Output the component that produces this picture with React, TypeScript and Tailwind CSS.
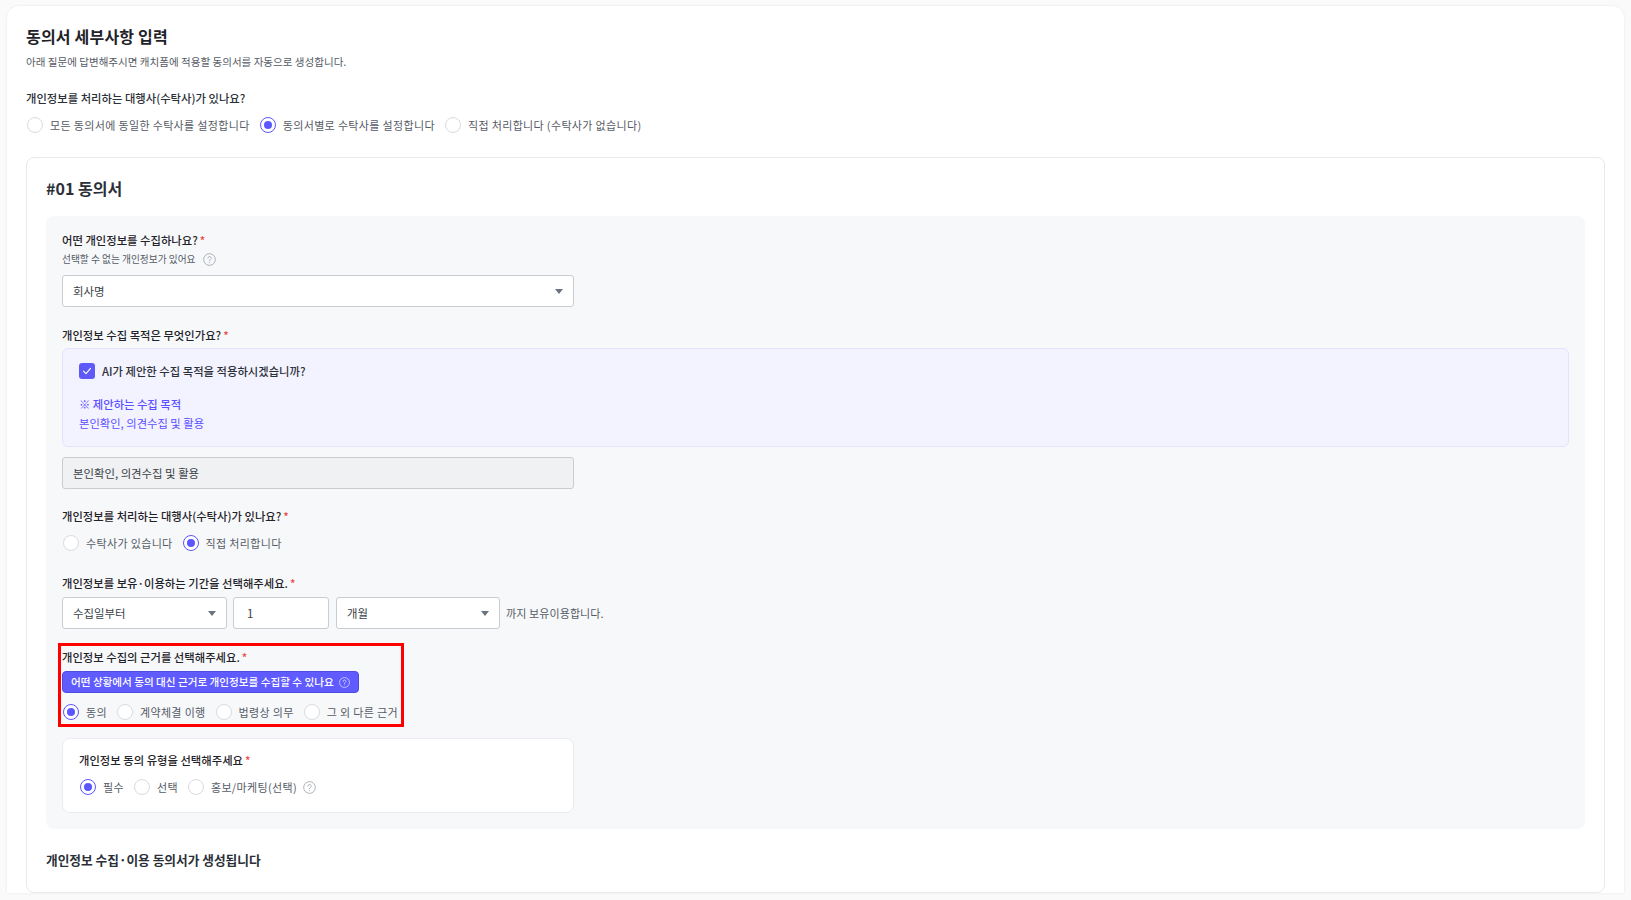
const FONT = "font-['Noto_Sans_CJK_KR','Noto_Sans',sans-serif]";

function Help({ className = "", color = "#9ca3af", size = 13 }: { className?: string; color?: string; size?: number }) {
  return (
    <svg width={size} height={size} viewBox="0 0 14 14" fill="none" className={className}>
      <circle cx="7" cy="7" r="6.3" stroke={color} strokeWidth="0.9" />
      <path d="M5.3 5.5a1.75 1.75 0 1 1 2.6 1.5c-.6.35-.9.7-.9 1.4" stroke={color} strokeWidth="0.9" strokeLinecap="round" />
      <circle cx="7" cy="10.2" r="0.55" fill={color} />
    </svg>
  );
}

function Radio({ label, checked = false }: { label: string; checked?: boolean }) {
  return (
    <label className="flex items-center gap-[7px]">
      {checked ? (
        <span className="flex h-4 w-4 items-center justify-center rounded-full border border-[#5b57ff] bg-white">
          <span className="h-2 w-2 rounded-full bg-[#5b57ff]" />
        </span>
      ) : (
        <span className="h-4 w-4 rounded-full border border-[#d9dbe0] bg-white" />
      )}
      <span className="text-[11px] leading-4 tracking-[0.35px] text-[#555b66]">{label}</span>
    </label>
  );
}

function Question({ text, className = "" }: { text: string; className?: string }) {
  return (
    <div className={`text-[11.33px] font-medium leading-4 text-[#1f2329] ${className}`}>
      {text}
      <span className="ml-[2px] text-[#ef4444]">*</span>
    </div>
  );
}

function Select({ value, className }: { value: string; className: string }) {
  return (
    <div className={`flex h-8 items-center justify-between rounded-[3px] border border-[#c9ccd1] bg-white pl-[10px] pr-[10px] text-[11.4px] text-[#3a3f47] ${className}`}>
      <span className="pt-[1px]">{value}</span>
      <span className="h-0 w-0 border-x-[4px] border-t-[5px] border-x-transparent border-t-[#6b7280]" />
    </div>
  );
}

export default function App() {
  return (
    <div className={`h-[900px] overflow-hidden bg-[#fafafa] pl-[7px] pr-[7px] pt-[6px] ${FONT}`}>
      <div className="rounded-t-[12px] bg-white pl-[19px] pr-[19px] pt-[19px] shadow-[0_0_3px_rgba(0,0,0,0.08)]">
        <h1 className="text-[16px] font-bold leading-[22px] tracking-[0.2px] text-[#1f2329]">동의서 세부사항 입력</h1>
        <p className="mt-[7px] text-[10.56px] leading-4 text-[#555b66]">아래 질문에 답변해주시면 캐치폼에 적용할 동의서를 자동으로 생성합니다.</p>
        <div className="mt-[20px] text-[11.33px] font-medium leading-4 text-[#2b3038]">개인정보를 처리하는 대행사(수탁사)가 있나요?</div>
        <div className="mt-[11px] flex gap-[10px] pl-[1px]">
          <Radio label="모든 동의서에 동일한 수탁사를 설정합니다" />
          <Radio label="동의서별로 수탁사를 설정합니다" checked />
          <Radio label="직접 처리합니다 (수탁사가 없습니다)" />
        </div>

        <section className="mt-[24px] h-[736px] rounded-[8px] border border-[#e8e9ec] bg-white pl-[19px] pr-[19px] pt-[19px]">
          <h2 className="text-[16px] font-bold leading-[22px] text-[#2b3038]">#01 동의서</h2>
          <div className="mt-[17px] h-[613px] rounded-[8px] bg-[#f7f8fa] pl-[16px] pr-[16px] pt-[16px]">
            <Question text="어떤 개인정보를 수집하나요?" />
            <div className="mt-[3px] flex items-center text-[9.7px] leading-4 text-[#555b66]">
              선택할 수 없는 개인정보가 있어요
              <Help className="ml-[8px]" />
            </div>
            <Select value="회사명" className="mt-[8px] w-[512px]" />

            <Question text="개인정보 수집 목적은 무엇인가요?" className="mt-[20px]" />
            <div className="mt-[5px] h-[99px] rounded-[6px] border border-[#e2e2ff] bg-[#f3f3ff] pl-[16px] pt-[14px]">
              <div className="flex items-center gap-[7px]">
                <span className="flex h-4 w-4 items-center justify-center rounded-[3px] bg-[#5f59f7]">
                  <svg width="10" height="10" viewBox="0 0 10 10" fill="none">
                    <path d="M1.5 5.2 4 7.7l4.5-5.4" stroke="white" strokeWidth="1.1" strokeLinecap="round" strokeLinejoin="round" />
                  </svg>
                </span>
                <span className="text-[11.33px] font-medium leading-4 text-[#2b3038]">AI가 제안한 수집 목적을 적용하시겠습니까?</span>
              </div>
              <div className="mt-[17px] text-[11.3px] font-medium leading-4 text-[#5b50ff]">※ 제안하는 수집 목적</div>
              <div className="mt-[3px] text-[11.3px] leading-4 text-[#5b50ff]">본인확인, 의견수집 및 활용</div>
            </div>
            <div className="mt-[10px] flex h-8 w-[512px] items-center rounded-[3px] border border-[#c9ccd1] bg-[#f0f1f3] pl-[10px] pt-[1px] text-[11.4px] text-[#3a3f47]">본인확인, 의견수집 및 활용</div>

            <Question text="개인정보를 처리하는 대행사(수탁사)가 있나요?" className="mt-[19px]" />
            <div className="mt-[11px] flex gap-[10px] pl-[1px]">
              <Radio label="수탁사가 있습니다" />
              <Radio label="직접 처리합니다" checked />
            </div>

            <Question text="개인정보를 보유·이용하는 기간을 선택해주세요." className="mt-[24px]" />
            <div className="mt-[6px] flex items-center gap-[6px]">
              <Select value="수집일부터" className="w-[165px]" />
              <div className="flex h-8 w-[96px] items-center rounded-[3px] border border-[#c9ccd1] bg-white pl-[13px] pt-[2px] text-[11.4px] text-[#3a3f47]">1</div>
              <Select value="개월" className="ml-[1px] w-[164px]" />
              <span className="text-[11px] tracking-[0.1px] text-[#555b66]">까지 보유이용합니다.</span>
            </div>

            <div className="-ml-[4px] mt-[14px] h-[84px] w-[346px] border-[3px] border-[#ff0000] pl-[1px] pt-[3px]">
              <Question text="개인정보 수집의 근거를 선택해주세요." />
              <div className="mt-[6px] flex h-[22px] w-[297px] items-center gap-[5px] rounded-[4px] border border-[#4f4be0] bg-[#5f5bff] pl-[8px] text-[10.6px] font-medium text-white">
                어떤 상황에서 동의 대신 근거로 개인정보를 수집할 수 있나요
                <Help color="#e5e7ff" size={11} />
              </div>
              <div className="mt-[11px] flex gap-[10px] pl-[1px]">
                <Radio label="동의" checked />
                <Radio label="계약체결 이행" />
                <Radio label="법령상 의무" />
                <Radio label="그 외 다른 근거" />
              </div>
            </div>

            <div className="mt-[11px] h-[75px] w-[512px] rounded-[8px] border border-[#ebecef] bg-white pl-[16px] pt-[13px]">
              <Question text="개인정보 동의 유형을 선택해주세요" />
              <div className="mt-[11px] flex items-center gap-[10px] pl-[1px]">
                <Radio label="필수" checked />
                <Radio label="선택" />
                <Radio label="홍보/마케팅(선택)" />
                <Help className="-ml-[4px]" />
              </div>
            </div>
          </div>
          <div className="mt-[21px] text-[12.7px] font-bold leading-5 text-[#2b3038]">개인정보 수집·이용 동의서가 생성됩니다</div>
        </section>
      </div>
    </div>
  );
}
